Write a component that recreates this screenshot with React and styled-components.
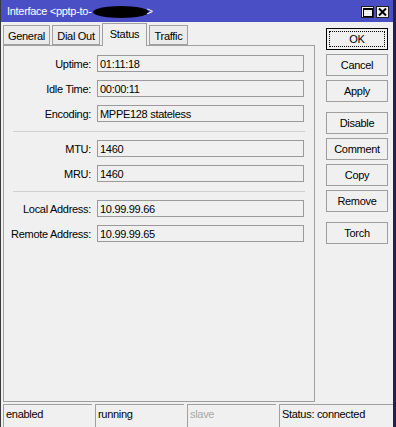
import styled, { createGlobalStyle } from "styled-components";

const GlobalStyle = createGlobalStyle`
  html, body {
    margin: 0;
    padding: 0;
    background: #f0f0f0;
  }
  body {
    font-family: "Liberation Sans", Arial, sans-serif;
    font-size: 11px;
    letter-spacing: -0.3px;
    color: #000;
  }
`;

const sections = [
  [
    { label: "Uptime", value: "01:11:18" },
    { label: "Idle Time", value: "00:00:11" },
    { label: "Encoding", value: "MPPE128 stateless" },
  ],
  [
    { label: "MTU", value: "1460" },
    { label: "MRU", value: "1460" },
  ],
  [
    { label: "Local Address", value: "10.99.99.66" },
    { label: "Remote Address", value: "10.99.99.65" },
  ],
];

const tabs = [
  { name: "General", width: 47 },
  { name: "Dial Out", width: 48 },
  { name: "Status", width: 45, active: true },
  { name: "Traffic", width: 39 },
];

const buttonGroups = [
  ["OK", "Cancel", "Apply"],
  ["Disable", "Comment", "Copy", "Remove"],
  ["Torch"],
];

const statusCells = [
  { text: "enabled", width: 89 },
  { text: "running", width: 89 },
  { text: "slave", width: 89, muted: true },
  { text: "Status: connected" },
];

const App = () => {
  return (
    <>
      <GlobalStyle />
      <Window>
        <TitleBar>
          <Title>
            Interface &lt;pptp-to-<Redacted />&gt;
          </Title>
          <TitleButtons>
            <TitleButton>
              <svg width="10" height="9" viewBox="0 0 10 9">
                <rect x="0.5" y="0.5" width="9" height="8" fill="none" stroke="#000" />
                <rect x="0" y="0" width="10" height="2" fill="#000" />
              </svg>
            </TitleButton>
            <TitleButton>
              <svg width="9" height="8" viewBox="0 0 9 8">
                <path d="M1 0.5 L8 7.5 M8 0.5 L1 7.5" stroke="#000" strokeWidth="2" />
              </svg>
            </TitleButton>
          </TitleButtons>
        </TitleBar>

        <Main>
          <LeftCol>
            <TabStrip>
              {tabs.map((t) => (
                <Tab key={t.name} $width={t.width} $active={t.active}>
                  {t.name}
                </Tab>
              ))}
            </TabStrip>
            <Panel>
              {sections.map((rows, i) => (
                <div key={i}>
                  {i > 0 && <Separator />}
                  <Section>
                    {rows.map((r) => (
                      <Row key={r.label}>
                        <Label>{r.label}:</Label>
                        <Field>{r.value}</Field>
                      </Row>
                    ))}
                  </Section>
                </div>
              ))}
            </Panel>
          </LeftCol>

          <Side>
            {buttonGroups.map((group, i) => (
              <ButtonGroup key={i}>
                {group.map((b) => (
                  <Button key={b} $primary={b === "OK"}>
                    {b}
                  </Button>
                ))}
              </ButtonGroup>
            ))}
          </Side>
        </Main>

        <StatusBar>
          {statusCells.map((c) => (
            <StatusCell key={c.text} $width={c.width} $muted={c.muted}>
              {c.text}
            </StatusCell>
          ))}
        </StatusBar>
      </Window>
    </>
  );
};

const Window = styled.div`
  width: 396px;
  height: 427px;
  box-sizing: border-box;
  border-left: 1px solid #3a3a3a;
  border-right: 3px solid #23234a;
  display: flex;
  flex-direction: column;
  overflow: hidden;
`;

const TitleBar = styled.div`
  height: 22px;
  flex: none;
  background: #4a4fc6;
  display: flex;
  align-items: center;
  justify-content: space-between;
  padding-left: 6px;
`;

const Title = styled.div`
  color: #fff;
  display: flex;
  align-items: center;
  white-space: nowrap;
`;

const Redacted = styled.span`
  display: inline-block;
  width: 56px;
  height: 12px;
  margin: 2px -2px 0 1px;
  background: #000;
  border-radius: 50%;
`;

const TitleButtons = styled.div`
  display: flex;
  gap: 2px;
  margin-right: 4px;
  margin-top: 2px;
`;

const TitleButton = styled.div`
  width: 13px;
  height: 12px;
  box-sizing: border-box;
  background: #f0f0f0;
  border: 1px solid #202020;
  display: flex;
  align-items: center;
  justify-content: center;
`;

const Main = styled.div`
  flex: 1;
  display: flex;
  min-height: 0;
`;

const LeftCol = styled.div`
  width: 314px;
  padding: 1px 0 0 2px;
  display: flex;
  flex-direction: column;
`;

const TabStrip = styled.div`
  display: flex;
  align-items: flex-end;
  gap: 2px;
  height: 22px;
  position: relative;
  z-index: 1;
`;

const Tab = styled.div`
  width: ${(p) => p.$width}px;
  height: ${(p) => (p.$active ? 23 : 20)}px;
  box-sizing: border-box;
  border: 1px solid #a0a0a0;
  border-bottom: ${(p) => (p.$active ? "none" : "1px solid #a0a0a0")};
  margin-bottom: ${(p) => (p.$active ? "-1px" : "0")};
  background: ${(p) => (p.$active ? "#f0f0f0" : "#ebebeb")};
  display: flex;
  justify-content: center;
  padding-top: ${(p) => (p.$active ? 4 : 4)}px;
`;

const Panel = styled.div`
  flex: 1;
  box-sizing: border-box;
  width: 312px;
  border: 1px solid #a0a0a0;
  padding-top: 9px;
  background: #f0f0f0;
`;

const Section = styled.div`
  display: flex;
  flex-direction: column;
  gap: 8px;
`;

const Separator = styled.div`
  height: 1px;
  background: #d0d0d0;
  margin: 9px 9px 8px 9px;
`;

const Row = styled.div`
  display: flex;
  align-items: center;
  gap: 6px;
  height: 17px;
`;

const Label = styled.div`
  width: 87px;
  text-align: right;
  white-space: nowrap;
`;

const Field = styled.div`
  width: 207px;
  height: 17px;
  box-sizing: border-box;
  border: 1px solid #9a9a9a;
  padding: 1px 0 0 2px;
  line-height: 14px;
  white-space: nowrap;
`;

const Side = styled.div`
  padding: 6px 0 0 9px;
  display: flex;
  flex-direction: column;
  gap: 10px;
`;

const ButtonGroup = styled.div`
  display: flex;
  flex-direction: column;
  gap: 4px;
`;

const Button = styled.div`
  width: 62px;
  height: 22px;
  box-sizing: border-box;
  border: 1px solid ${(p) => (p.$primary ? "#000" : "#9e9e9e")};
  background: #f0f0f0;
  display: flex;
  align-items: center;
  justify-content: center;
  outline: ${(p) => (p.$primary ? "1px dotted #000" : "none")};
  outline-offset: -4px;
`;

const StatusBar = styled.div`
  height: 25px;
  flex: none;
  box-sizing: border-box;
  padding: 2px 0 0 2px;
  display: flex;
  gap: 3px;
`;

const StatusCell = styled.div`
  ${(p) => (p.$width ? `width: ${p.$width}px;` : "flex: 1;")}
  box-sizing: border-box;
  border-top: 1px solid #a0a0a0;
  border-left: 1px solid #a0a0a0;
  padding: 3px 0 0 2px;
  color: ${(p) => (p.$muted ? "#a8a8a8" : "#000")};
  white-space: nowrap;
`;

export default App;
